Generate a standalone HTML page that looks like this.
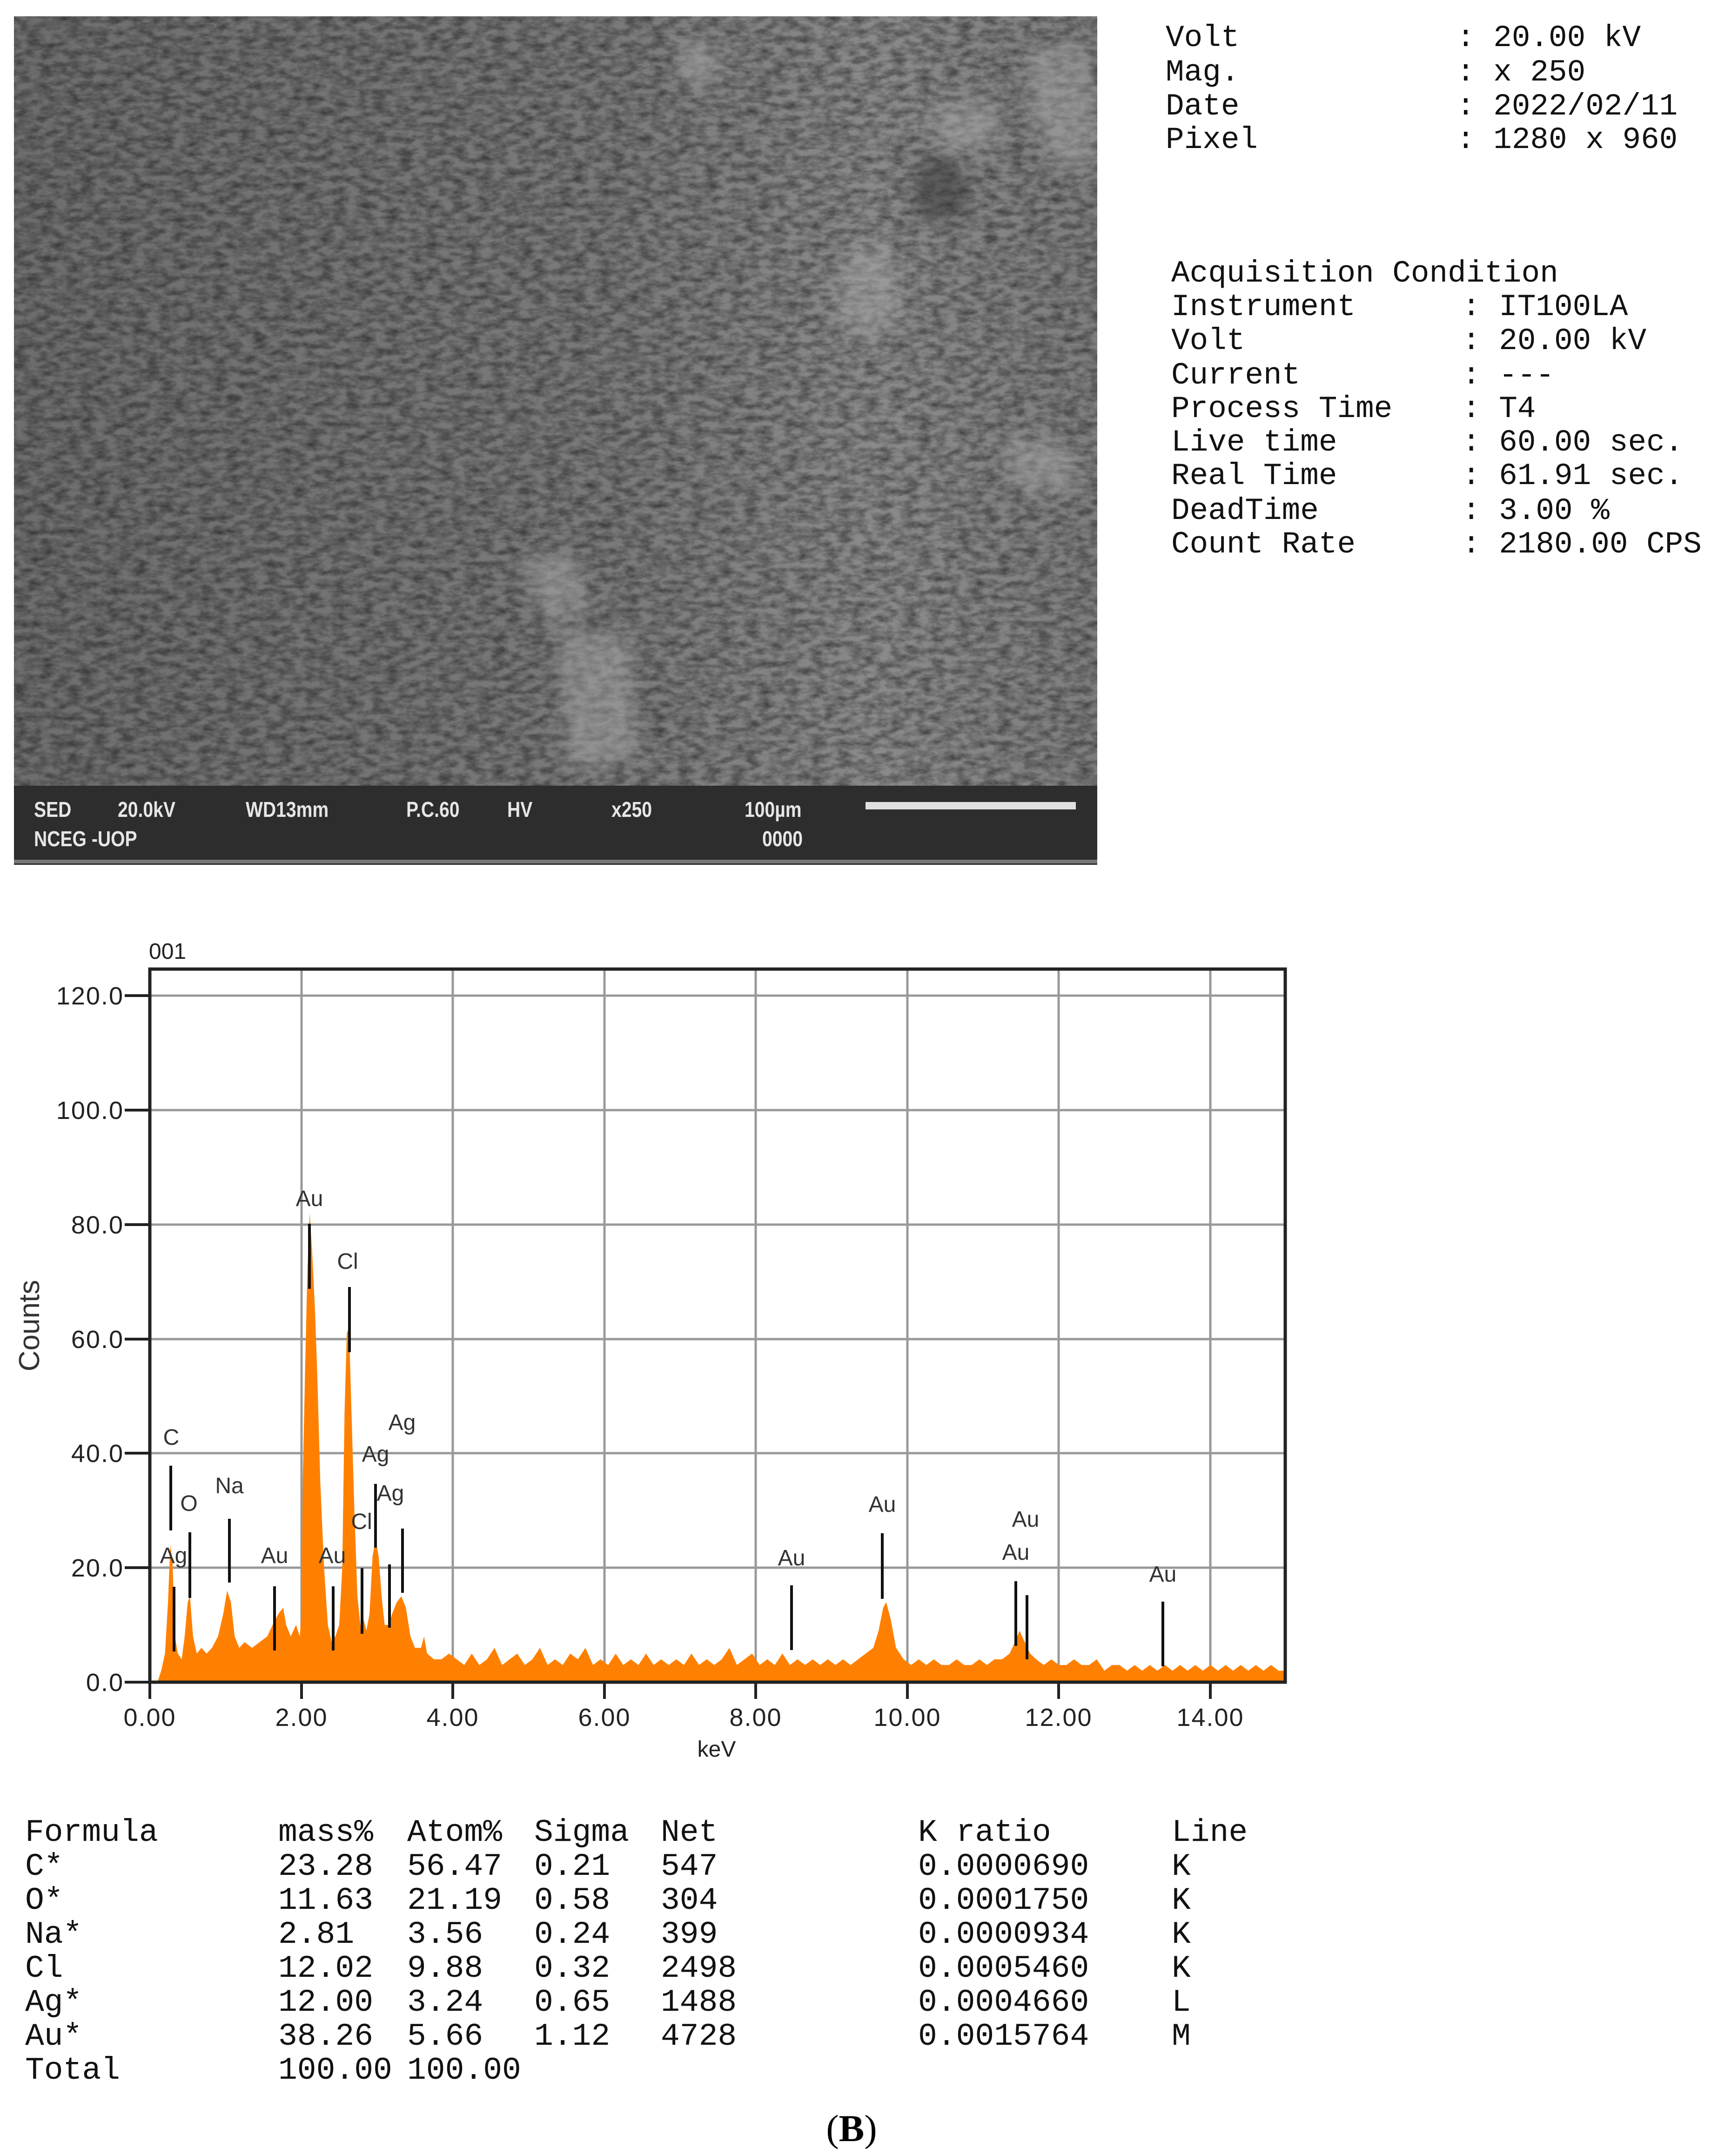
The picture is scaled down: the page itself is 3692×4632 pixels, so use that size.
<!DOCTYPE html>
<html><head><meta charset="utf-8"><style>
html,body{margin:0;padding:0;background:#fff}
body{width:3692px;height:4632px;position:relative;overflow:hidden}
.m{position:absolute;font-family:"Liberation Mono",monospace;font-size:66px;line-height:66px;color:#111;white-space:pre}
.t{position:absolute;font-family:"Liberation Mono",monospace;font-size:68px;line-height:68px;color:#111;white-space:pre}
.b{position:absolute;font-family:"Liberation Sans",sans-serif;font-weight:bold;font-size:46px;color:#e6e6e6;white-space:pre;transform:scaleX(0.85);transform-origin:left}
</style></head><body>

<!-- SEM image -->
<svg style="position:absolute;left:30px;top:35px" width="2328" height="1823" viewBox="0 0 2328 1823">
<defs>
<filter id="n" x="0" y="0" width="100%" height="100%">
<feTurbulence type="fractalNoise" baseFrequency="0.035 0.07" numOctaves="5" seed="7"/>
<feColorMatrix type="matrix" values="0 0 0 0 0  0 0 0 0 0  0 0 0 0 0  0 0 0 -1.6 1.1"/>
</filter>
<filter id="bl"><feGaussianBlur stdDeviation="18"/></filter>
<linearGradient id="g" x1="0" y1="0" x2="1" y2="0">
<stop offset="0" stop-color="#6e6e6e"/><stop offset="0.55" stop-color="#7a7a7a"/><stop offset="0.8" stop-color="#8a8a8a"/><stop offset="1" stop-color="#7e7e7e"/>
</linearGradient>
</defs>
<rect width="2328" height="1653" fill="url(#g)"/>
<rect width="2328" height="1653" fill="#000" filter="url(#n)" opacity="0.5"/>
<g filter="url(#bl)">
<path d="M1930 360 Q1960 280 2020 300 L2060 400 Q2000 460 1940 430Z" fill="#333" opacity="0.5"/>
<g fill="#b0b0b0" opacity="0.45">
<path d="M2180 80 L2290 50 L2330 200 L2320 330 L2240 320 L2190 220Z"/>
<path d="M1950 200 L2100 180 L2120 260 L2020 300Z"/>
<path d="M1780 520 L1880 480 L1900 640 L1830 700 L1770 640Z"/>
<path d="M1090 1170 L1200 1150 L1240 1280 L1140 1300Z"/>
<path d="M1170 1320 L1320 1330 L1340 1600 L1190 1620Z"/>
<path d="M2120 900 L2270 920 L2290 1020 L2160 1020Z"/>
<path d="M1420 60 L1500 50 L1520 140 L1440 150Z"/>
</g></g>
<rect y="1653" width="2328" height="170" fill="#2d2d2d"/>
<rect y="1812" width="2328" height="8" fill="#777"/>
<rect x="1830" y="1688" width="452" height="16" fill="#e0e0e0"/>
</svg>
<div class="b" style="left:73px;top:1712px">SED</div>
<div class="b" style="left:253px;top:1712px">20.0kV</div>
<div class="b" style="left:528px;top:1712px">WD13mm</div>
<div class="b" style="left:873px;top:1712px">P.C.60</div>
<div class="b" style="left:1090px;top:1712px">HV</div>
<div class="b" style="left:1314px;top:1712px">x250</div>
<div class="b" style="left:1600px;top:1712px">100µm</div>
<div class="b" style="left:73px;top:1775px">NCEG -UOP</div>
<div class="b" style="left:1638px;top:1775px">0000</div>

<!-- right info -->
<div class="m" style="left:2505px;top:49px">Volt</div><div class="m" style="left:3130px;top:49px">: 20.00 kV</div>
<div class="m" style="left:2505px;top:123px">Mag.</div><div class="m" style="left:3130px;top:123px">: x 250</div>
<div class="m" style="left:2505px;top:196px">Date</div><div class="m" style="left:3130px;top:196px">: 2022/02/11</div>
<div class="m" style="left:2505px;top:268px">Pixel</div><div class="m" style="left:3130px;top:268px">: 1280 x 960</div>

<div class="m" style="left:2517px;top:555px">Acquisition Condition</div>
<div class="m" style="left:2517px;top:627px">Instrument</div><div class="m" style="left:3142px;top:627px">: IT100LA</div>
<div class="m" style="left:2517px;top:700px">Volt</div><div class="m" style="left:3142px;top:700px">: 20.00 kV</div>
<div class="m" style="left:2517px;top:774px">Current</div><div class="m" style="left:3142px;top:774px">: ---</div>
<div class="m" style="left:2517px;top:846px">Process Time</div><div class="m" style="left:3142px;top:846px">: T4</div>
<div class="m" style="left:2517px;top:918px">Live time</div><div class="m" style="left:3142px;top:918px">: 60.00 sec.</div>
<div class="m" style="left:2517px;top:990px">Real Time</div><div class="m" style="left:3142px;top:990px">: 61.91 sec.</div>
<div class="m" style="left:2517px;top:1065px">DeadTime</div><div class="m" style="left:3142px;top:1065px">: 3.00 %</div>
<div class="m" style="left:2517px;top:1137px">Count Rate</div><div class="m" style="left:3142px;top:1137px">: 2180.00 CPS</div>

<!-- chart -->
<svg style="position:absolute;left:0;top:0" width="3692" height="3800" viewBox="0 0 3692 3800" font-family="Liberation Sans, sans-serif">
<g stroke="#999" stroke-width="5">
<line x1="648" y1="2082" x2="648" y2="3614"/><line x1="973" y1="2082" x2="973" y2="3614"/><line x1="1299" y1="2082" x2="1299" y2="3614"/>
<line x1="1624" y1="2082" x2="1624" y2="3614"/><line x1="1950" y1="2082" x2="1950" y2="3614"/><line x1="2275" y1="2082" x2="2275" y2="3614"/><line x1="2601" y1="2082" x2="2601" y2="3614"/>
<line x1="322" y1="2139" x2="2762" y2="2139"/><line x1="322" y1="2385" x2="2762" y2="2385"/><line x1="322" y1="2631" x2="2762" y2="2631"/>
<line x1="322" y1="2877" x2="2762" y2="2877"/><line x1="322" y1="3122" x2="2762" y2="3122"/><line x1="322" y1="3368" x2="2762" y2="3368"/>
</g>
<g transform="translate(322,3614) scale(162.8,-12.29)">
<path fill="#ff8000" d="M0.1 0 L0.15 2 L0.2 5 L0.24 14 L0.27 24 L0.3 21 L0.33 8 L0.37 5 L0.42 4 L0.46 8 L0.5 14 L0.53 15 L0.57 8 L0.62 5 L0.68 6 L0.75 5 L0.82 6 L0.9 8 L0.97 12 L1.02 16 L1.07 14 L1.12 8 L1.18 6 L1.25 7 L1.35 6 L1.45 7 L1.55 8 L1.62 10 L1.7 12 L1.76 13 L1.8 10 L1.86 8 L1.93 10 L1.98 8 L2.0 12 L2.02 36 L2.05 55 L2.08 72 L2.11 82 L2.14 76 L2.18 65 L2.21 54 L2.25 35 L2.3 20 L2.35 10 L2.4 7 L2.45 8 L2.5 10 L2.54 20 L2.57 47 L2.6 61 L2.63 62 L2.66 48 L2.7 30 L2.74 15 L2.78 10 L2.82 11 L2.86 9 L2.9 12 L2.94 22 L2.98 25 L3.02 22 L3.06 15 L3.1 10 L3.15 10 L3.2 12 L3.26 14 L3.32 15 L3.38 13 L3.44 8 L3.5 6 L3.58 6 L3.62 8 L3.66 5 L3.75 4 L3.85 4 L3.95 5 L4.05 4 L4.15 3 L4.25 5 L4.35 3 L4.45 4 L4.55 6 L4.65 3 L4.75 4 L4.85 5 L4.95 3 L5.05 4 L5.15 6 L5.25 3 L5.35 4 L5.45 3 L5.55 5 L5.65 4 L5.75 6 L5.85 3 L5.95 4 L6.05 3 L6.15 5 L6.25 3 L6.35 4 L6.45 3 L6.55 5 L6.65 3 L6.75 4 L6.85 3 L6.95 4 L7.05 3 L7.15 5 L7.25 3 L7.35 4 L7.45 3 L7.55 4 L7.65 6 L7.75 3 L7.85 4 L7.95 5 L8.05 3 L8.15 4 L8.25 3 L8.35 5 L8.45 3 L8.55 4 L8.65 3 L8.75 4 L8.85 3 L8.95 4 L9.05 3 L9.15 4 L9.25 3 L9.35 4 L9.45 5 L9.55 6 L9.62 9 L9.68 13 L9.72 14 L9.78 11 L9.85 6 L9.95 4 L10.05 3 L10.15 4 L10.25 3 L10.35 4 L10.45 3 L10.55 3 L10.65 4 L10.75 3 L10.85 3 L10.95 4 L11.05 3 L11.15 4 L11.25 4 L11.35 5 L11.42 7 L11.48 9 L11.55 7 L11.62 5 L11.7 4 L11.8 3 L11.9 4 L12.0 3 L12.1 3 L12.2 4 L12.3 3 L12.4 3 L12.5 4 L12.6 2 L12.7 3 L12.8 3 L12.9 2 L13.0 3 L13.1 2 L13.2 3 L13.3 2 L13.4 3 L13.5 2 L13.6 3 L13.7 2 L13.8 3 L13.9 2 L14.0 3 L14.1 2 L14.2 3 L14.3 2 L14.4 3 L14.5 2 L14.6 3 L14.7 2 L14.8 3 L14.9 2 L15 2 L15 0 Z"/>
</g>
<rect x="322" y="2082" width="2440" height="1532" fill="none" stroke="#222" stroke-width="7"/>
<g stroke="#222" stroke-width="6">
<line x1="268" y1="2139" x2="322" y2="2139"/><line x1="268" y1="2385" x2="322" y2="2385"/><line x1="268" y1="2631" x2="322" y2="2631"/>
<line x1="268" y1="2877" x2="322" y2="2877"/><line x1="268" y1="3122" x2="322" y2="3122"/><line x1="268" y1="3368" x2="322" y2="3368"/><line x1="268" y1="3614" x2="322" y2="3614"/>
<line x1="322" y1="3614" x2="322" y2="3650"/><line x1="648" y1="3614" x2="648" y2="3650"/><line x1="973" y1="3614" x2="973" y2="3650"/><line x1="1299" y1="3614" x2="1299" y2="3650"/>
<line x1="1624" y1="3614" x2="1624" y2="3650"/><line x1="1950" y1="3614" x2="1950" y2="3650"/><line x1="2275" y1="3614" x2="2275" y2="3650"/><line x1="2601" y1="3614" x2="2601" y2="3650"/>
</g>
<g fill="#222" font-size="54" text-anchor="end" letter-spacing="2">
<text x="266" y="2158">120.0</text><text x="266" y="2404">100.0</text><text x="266" y="2650">80.0</text><text x="266" y="2896">60.0</text>
<text x="266" y="3141">40.0</text><text x="266" y="3387">20.0</text><text x="266" y="3633">0.0</text>
</g>
<g fill="#222" font-size="54" text-anchor="middle" letter-spacing="2">
<text x="322" y="3708">0.00</text><text x="648" y="3708">2.00</text><text x="973" y="3708">4.00</text><text x="1299" y="3708">6.00</text>
<text x="1624" y="3708">8.00</text><text x="1950" y="3708">10.00</text><text x="2275" y="3708">12.00</text><text x="2601" y="3708">14.00</text>
<text x="1540" y="3774" letter-spacing="0" font-size="48">keV</text>
</g>
<text x="320" y="2060" font-size="48" fill="#222">001</text>
<text transform="translate(84,2848) rotate(-90)" font-size="62" fill="#333" text-anchor="middle">Counts</text>
<g stroke="#111" stroke-width="6">
<line x1="367" y1="3149" x2="367" y2="3288"/><line x1="374" y1="3409" x2="374" y2="3548"/><line x1="408" y1="3292" x2="408" y2="3433"/>
<line x1="493" y1="3263" x2="493" y2="3400"/><line x1="590" y1="3408" x2="590" y2="3546"/><line x1="665" y1="2629" x2="665" y2="2769"/>
<line x1="716" y1="3408" x2="716" y2="3546"/><line x1="751" y1="2765" x2="751" y2="2905"/><line x1="778" y1="3369" x2="778" y2="3510"/>
<line x1="807" y1="3188" x2="807" y2="3325"/><line x1="837" y1="3361" x2="837" y2="3497"/><line x1="865" y1="3284" x2="865" y2="3422"/>
<line x1="1701" y1="3406" x2="1701" y2="3545"/><line x1="1896" y1="3294" x2="1896" y2="3435"/><line x1="2183" y1="3397" x2="2183" y2="3536"/>
<line x1="2207" y1="3427" x2="2207" y2="3565"/><line x1="2499" y1="3441" x2="2499" y2="3580"/>
</g>
<g fill="#333" font-size="48" text-anchor="middle">
<text x="665" y="2591">Au</text><text x="747" y="2726">Cl</text><text x="368" y="3104">C</text><text x="406" y="3246">O</text>
<text x="493" y="3208">Na</text><text x="864" y="3072">Ag</text><text x="807" y="3140">Ag</text><text x="839" y="3224">Ag</text>
<text x="777" y="3285">Cl</text><text x="373" y="3358">Ag</text><text x="590" y="3358">Au</text><text x="714" y="3358">Au</text>
<text x="1701" y="3363">Au</text><text x="1896" y="3248">Au</text><text x="2183" y="3351">Au</text><text x="2204" y="3280">Au</text><text x="2499" y="3398">Au</text>
</g>
</svg>

<!-- table -->
<div class="t" style="left:54px;top:3904px">Formula</div>
<div class="t" style="left:598px;top:3904px">mass%</div><div class="t" style="left:875px;top:3904px">Atom%</div><div class="t" style="left:1148px;top:3904px">Sigma</div><div class="t" style="left:1420px;top:3904px">Net</div><div class="t" style="left:1973px;top:3904px">K ratio</div><div class="t" style="left:2518px;top:3904px">Line</div>

<div class="t" style="left:54px;top:3977px">C*</div><div class="t" style="left:598px;top:3977px">23.28</div><div class="t" style="left:875px;top:3977px">56.47</div><div class="t" style="left:1148px;top:3977px">0.21</div><div class="t" style="left:1420px;top:3977px">547</div><div class="t" style="left:1973px;top:3977px">0.0000690</div><div class="t" style="left:2518px;top:3977px">K</div>

<div class="t" style="left:54px;top:4050px">O*</div><div class="t" style="left:598px;top:4050px">11.63</div><div class="t" style="left:875px;top:4050px">21.19</div><div class="t" style="left:1148px;top:4050px">0.58</div><div class="t" style="left:1420px;top:4050px">304</div><div class="t" style="left:1973px;top:4050px">0.0001750</div><div class="t" style="left:2518px;top:4050px">K</div>

<div class="t" style="left:54px;top:4123px">Na*</div><div class="t" style="left:598px;top:4123px">2.81</div><div class="t" style="left:875px;top:4123px">3.56</div><div class="t" style="left:1148px;top:4123px">0.24</div><div class="t" style="left:1420px;top:4123px">399</div><div class="t" style="left:1973px;top:4123px">0.0000934</div><div class="t" style="left:2518px;top:4123px">K</div>

<div class="t" style="left:54px;top:4196px">Cl</div><div class="t" style="left:598px;top:4196px">12.02</div><div class="t" style="left:875px;top:4196px">9.88</div><div class="t" style="left:1148px;top:4196px">0.32</div><div class="t" style="left:1420px;top:4196px">2498</div><div class="t" style="left:1973px;top:4196px">0.0005460</div><div class="t" style="left:2518px;top:4196px">K</div>

<div class="t" style="left:54px;top:4269px">Ag*</div><div class="t" style="left:598px;top:4269px">12.00</div><div class="t" style="left:875px;top:4269px">3.24</div><div class="t" style="left:1148px;top:4269px">0.65</div><div class="t" style="left:1420px;top:4269px">1488</div><div class="t" style="left:1973px;top:4269px">0.0004660</div><div class="t" style="left:2518px;top:4269px">L</div>

<div class="t" style="left:54px;top:4342px">Au*</div><div class="t" style="left:598px;top:4342px">38.26</div><div class="t" style="left:875px;top:4342px">5.66</div><div class="t" style="left:1148px;top:4342px">1.12</div><div class="t" style="left:1420px;top:4342px">4728</div><div class="t" style="left:1973px;top:4342px">0.0015764</div><div class="t" style="left:2518px;top:4342px">M</div>

<div class="t" style="left:54px;top:4415px">Total</div><div class="t" style="left:598px;top:4415px">100.00</div><div class="t" style="left:875px;top:4415px">100.00</div>

<div style="position:absolute;left:0;width:3692px;top:4528px;text-align:center;font-family:'Liberation Serif',serif;font-size:82px;line-height:90px;color:#000"><span style="position:relative;left:-16px">(<b>B</b>)</span></div>
</body></html>
